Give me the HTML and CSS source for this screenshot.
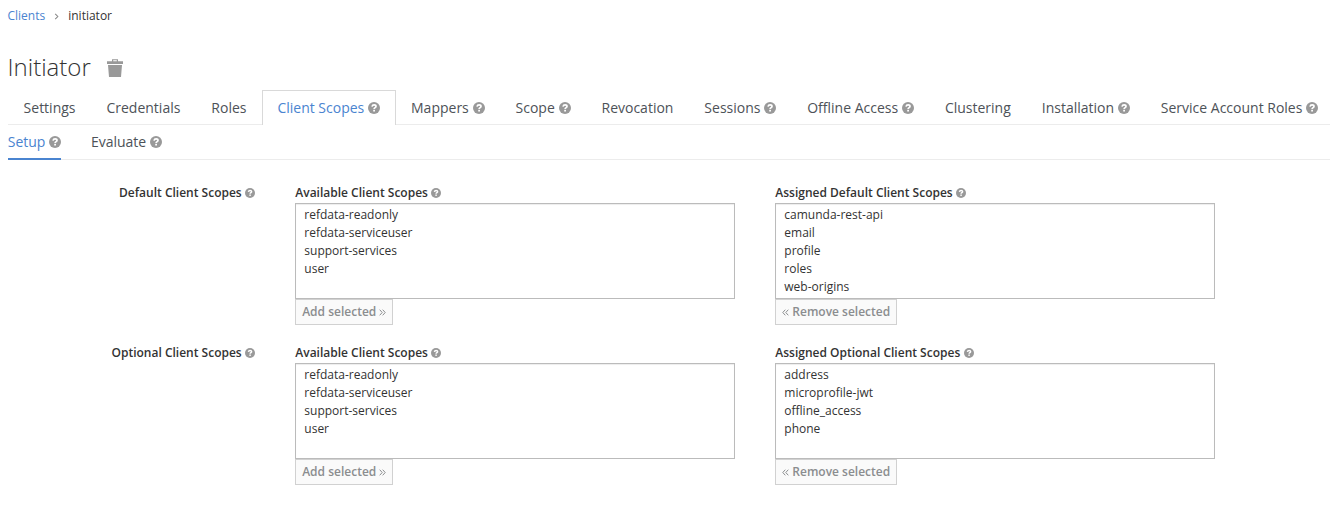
FILE: index.html
```html
<!DOCTYPE html>
<html lang="en">
<head>
<meta charset="utf-8">
<title>Initiator</title>
<link rel="stylesheet" href="styles.css">
</head>
<body>
<svg class="defs" width="0" height="0" aria-hidden="true">
  <symbol id="help" viewBox="0 0 12 12">
    <circle cx="6" cy="6" r="6" fill="currentColor"/>
    <path d="M4 4.6C4.3 3.3 5 2.9 6.1 2.9c1.1 0 1.9.6 1.9 1.5 0 1.2-1.9 1.2-1.9 2.6" fill="none" stroke="#fff" stroke-width="1.7"/>
    <rect x="5.2" y="7.8" width="1.8" height="1.7" fill="#fff"/>
  </symbol>
</svg>
<nav class="breadcrumb"><a>Clients</a><svg class="chevron" viewBox="0 0 5 8"><path d="M1 1l3 3-3 3"/></svg><span>initiator</span></nav>
<h1 class="title">Initiator
  <svg class="trash" viewBox="0 0 16 18"><path d="M0 2.2h5V.2h6v2h5V5H0zM6.2 1.3v1h3.6v-1zM1 6h14l-1 12H2z" fill-rule="evenodd"/></svg>
</h1>
<ul class="tabs">
  <li>Settings</li>
  <li>Credentials</li>
  <li>Roles</li>
  <li class="active">Client Scopes<svg class="help"><use href="#help"/></svg></li>
  <li>Mappers<svg class="help"><use href="#help"/></svg></li>
  <li>Scope<svg class="help"><use href="#help"/></svg></li>
  <li>Revocation</li>
  <li>Sessions<svg class="help"><use href="#help"/></svg></li>
  <li>Offline Access<svg class="help"><use href="#help"/></svg></li>
  <li>Clustering</li>
  <li>Installation<svg class="help"><use href="#help"/></svg></li>
  <li>Service Account Roles<svg class="help"><use href="#help"/></svg></li>
</ul>
<ul class="subtabs">
  <li class="active">Setup<svg class="help"><use href="#help"/></svg></li>
  <li>Evaluate<svg class="help"><use href="#help"/></svg></li>
</ul>
<main class="form">
  <section class="row">
    <div class="label group">Default Client Scopes<svg class="help"><use href="#help"/></svg></div>
    <div class="col">
      <div class="label">Available Client Scopes<svg class="help"><use href="#help"/></svg></div>
      <ul class="list"><li>refdata-readonly</li><li>refdata-serviceuser</li><li>support-services</li><li>user</li></ul>
      <button class="btn add">Add selected <svg class="angles" viewBox="0 0 7 7"><path d="M.7.7l2.5 2.8L.7 6.3M3.7.7l2.5 2.8-2.5 2.8"/></svg></button>
    </div>
    <div class="col">
      <div class="label">Assigned Default Client Scopes<svg class="help"><use href="#help"/></svg></div>
      <ul class="list"><li>camunda-rest-api</li><li>email</li><li>profile</li><li>roles</li><li>web-origins</li></ul>
      <button class="btn remove"><svg class="angles" viewBox="0 0 7 7"><path d="M3.3.7L.8 3.5l2.5 2.8M6.3.7L3.8 3.5l2.5 2.8"/></svg> Remove selected</button>
    </div>
  </section>
  <section class="row">
    <div class="label group">Optional Client Scopes<svg class="help"><use href="#help"/></svg></div>
    <div class="col">
      <div class="label">Available Client Scopes<svg class="help"><use href="#help"/></svg></div>
      <ul class="list"><li>refdata-readonly</li><li>refdata-serviceuser</li><li>support-services</li><li>user</li></ul>
      <button class="btn add">Add selected <svg class="angles" viewBox="0 0 7 7"><path d="M.7.7l2.5 2.8L.7 6.3M3.7.7l2.5 2.8-2.5 2.8"/></svg></button>
    </div>
    <div class="col">
      <div class="label">Assigned Optional Client Scopes<svg class="help"><use href="#help"/></svg></div>
      <ul class="list"><li>address</li><li>microprofile-jwt</li><li>offline_access</li><li>phone</li></ul>
      <button class="btn remove"><svg class="angles" viewBox="0 0 7 7"><path d="M3.3.7L.8 3.5l2.5 2.8M6.3.7L3.8 3.5l2.5 2.8"/></svg> Remove selected</button>
    </div>
  </section>
</main>
</body>
</html>
```
FILE: styles.css
```css
* { box-sizing: border-box; }
body { margin: 0; padding: 6px 0 0 8px; height: 511px; overflow: hidden; background: #fff; color: #333; font: 12px/20px "Open Sans", sans-serif; }
ul { list-style: none; margin: 0; padding: 0; }
svg { flex: none; }
.defs { display: block; }
.breadcrumb { display: flex; align-items: center; height: 20px; margin-left: -0.5px; }
.breadcrumb a { color: #4a84d0; }
.chevron { width: 5px; height: 7px; margin: 1px 9px 0; fill: none; stroke: #888; stroke-width: 1.2; }
.title { display: flex; align-items: center; height: 32px; margin: 25px 0 7px -0.5px; font-size: 24px; line-height: 32px; font-weight: 300; }
.trash { width: 16px; height: 18px; margin: 2px 0 0 15.8px; fill: #999; }
.help { width: 12px; height: 12px; margin-left: 3.8px; color: #999; }
.tabs { display: flex; height: 35px; border-bottom: 1px solid #ececec; color: #4d5258; font-size: 14px; white-space: nowrap; }
.tabs li { display: flex; align-items: center; height: 35px; margin-right: -1px; padding: 0 15.35px 0 14.6px; border: 1px solid transparent; border-bottom: 0; }
.tabs li.active { color: #4a84d0; background: #fff; border-color: #d9d9d9; }
.subtabs { display: flex; gap: 30px; height: 35px; border-bottom: 1px solid #ececec; color: #4d5258; font-size: 14px; }
.subtabs li { display: flex; align-items: center; height: 35px; margin-left: -0.3px; border-bottom: 2px solid transparent; }
.subtabs li.active { color: #4a84d0; border-color: #4a84d0; }
.form { padding-top: 23px; }
.row { display: grid; grid-template-columns: 247px 440px 440px; column-gap: 40px; height: 160px; }
.label { display: flex; align-items: center; height: 20px; padding-left: 0.3px; font-weight: 600; }
.label .help { width: 10px; height: 10px; margin-left: 3.3px; }
.group { justify-content: flex-end; }
.list { height: 96px; padding: 1px 8.3px; border: 1px solid #bbb; box-shadow: inset 0 1px 1px rgba(3, 3, 3, .075); }
.list li { height: 18px; line-height: 20px; }
.btn { display: flex; align-items: center; justify-content: center; height: 26px; padding: 0; border: 1px solid #d1d1d1; background: #fafafa; color: #8b8d8f; font: 600 12px/20px "Open Sans", sans-serif; }
.add { width: 98px; gap: 2.5px; }
.remove { width: 122px; gap: 3.5px; }
.angles { width: 7px; height: 7px; margin-top: 1px; fill: none; stroke: currentColor; stroke-width: 1; }
```
